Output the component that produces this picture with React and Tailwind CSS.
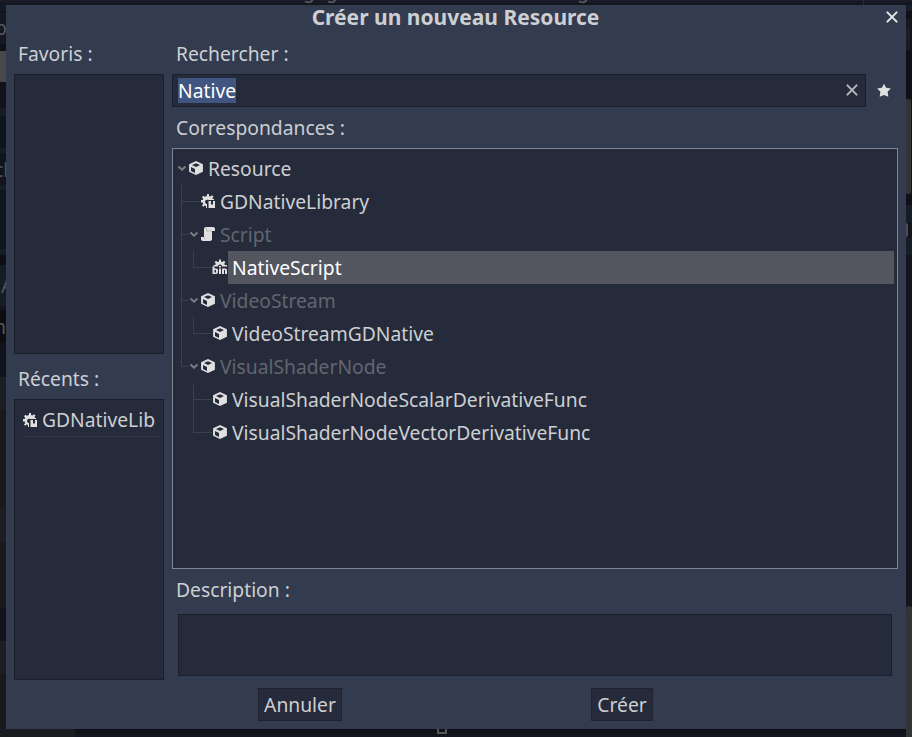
import React from "react";

function CubeIcon() {
  return (
    <svg width="16" height="16" viewBox="0 0 16 16" className="mb-px shrink-0">
      <path
        fill="#e0e0e0"
        fillRule="evenodd"
        d="M8 .9 1.1 4.200v7.600L8 15.100l6.900-3.300V4.200zM8 3.200l4 1.800-4 1.900L4 5zM3 7l4 2v4l-4-2z"
      />
    </svg>
  );
}

function LibraryIcon() {
  return (
    <svg width="16" height="16" viewBox="0 0 16 16" className="mb-px shrink-0">
      <path
        fill="#e0e0e0"
        d="M7 1h2v2l1.400.5L12 2.200 13.500 3.600 12.400 5l.6 1H14v1H8.500C6.500 6.500 5 7.500 5 9c0 1 .8 1.900 2 2.200V15H6v-2l-1.300-.5L3.400 13.800 2 12.400l1.200-1.400L2.700 9.500H1v-2.500h1.700l.5-1.300L2 4.200 3.400 2.700l1.300 1.100L7 3z"
      />
      <path fill="#e0e0e0" d="M8.500 8h2.500v3.500h2V8h2v7H8.500z" />
    </svg>
  );
}

function ScriptIcon() {
  return (
    <svg width="16" height="16" viewBox="0 0 16 16" className="mb-px shrink-0">
      <path
        fill="#e0e0e0"
        d="M6 1C4.900 1 4 1.900 4 3v8H1v2c0 1.100.9 2 2 2h7c1.100 0 2-.9 2-2V5h3V3c0-1.100-.9-2-2-2z"
      />
      <path fill="none" stroke="#b4b4b4" strokeWidth=".9" d="M6.500 2v3h5.500M4.500 11v2" />
    </svg>
  );
}

function NativeScriptIcon() {
  return (
    <svg width="16" height="16" viewBox="0 0 16 16" className="mb-px shrink-0">
      <path
        fill="#e0e0e0"
        d="M7 .5h2v2l1.300.6L12 1.800 13.400 3.200 12.200 4.700l.6 1.300H15v1.500h-5a2 2 0 0 0-4 0H1.500V6h1.700l.6-1.300L2.600 3.200 4 1.800l1.700 1.300L7 2.500z"
      />
      <g fill="#e0e0e0">
        <path fillRule="evenodd" d="M.5 7.500h2V9.500H4c1.300 0 2 .8 2 1.800v1.800c0 1.200-.8 1.900-2 1.900H.5zM2.500 11v2.500h1.500V11z" />
        <path d="M7 7h2v1.500H7zM7 9.500h2V15H7zM10 9.500h3c1.300 0 2 .8 2 1.800V15h-2v-4h-1v4h-2z" />
      </g>
    </svg>
  );
}

function CrossIcon({ color, className }) {
  return (
    <svg width="16" height="16" viewBox="0 0 16 16" className={`shrink-0 ${className}`}>
      <path
        d="M3.400 3.400l9.200 9.200M12.600 3.400l-9.200 9.200"
        stroke={color}
        strokeWidth="2"
        strokeLinecap="round"
        fill="none"
      />
    </svg>
  );
}

function StarIcon() {
  return (
    <svg width="16" height="16" viewBox="0 0 16 16" className="mb-px shrink-0">
      <path
        fill="#e0e0e0"
        d="M8 1.700l2.100 4 4.700.7-3.200 3.400.7 4.900L8 13l-4.300 1.700.7-4.900L1.200 6.400l4.700-.7z"
      />
    </svg>
  );
}

function Arrow() {
  return (
    <svg width="12" height="12" viewBox="0 0 12 12" className="mb-px shrink-0">
      <path d="M2.500 4.500l3.500 3.200 3.500-3.200" stroke="#7c7e86" strokeWidth="2" fill="none" />
    </svg>
  );
}

const icons = {
  cube: CubeIcon,
  library: LibraryIcon,
  script: ScriptIcon,
  native: NativeScriptIcon,
};

const tree = [
  { name: "Resource", level: 0, icon: "cube", open: true },
  { name: "GDNativeLibrary", level: 1, icon: "library" },
  { name: "Script", level: 1, icon: "script", open: true, dim: true },
  { name: "NativeScript", level: 2, icon: "native", last: true, through: true, selected: true },
  { name: "VideoStream", level: 1, icon: "cube", open: true, dim: true },
  { name: "VideoStreamGDNative", level: 2, icon: "cube", last: true, through: true },
  { name: "VisualShaderNode", level: 1, icon: "cube", open: true, dim: true, last: true },
  { name: "VisualShaderNodeScalarDerivativeFunc", level: 2, icon: "cube" },
  { name: "VisualShaderNodeVectorDerivativeFunc", level: 2, icon: "cube", last: true },
];

function Branch({ last, narrow }) {
  const width = narrow ? "w-[7px]" : "w-[19px]";
  return (
    <span className={`${width} h-full shrink-0 ${last ? "" : "border-l border-[#3b404e]"}`}>
      <span className={`block h-[17px] border-b border-[#3b404e] ${last ? "border-l" : ""}`} />
    </span>
  );
}

function TreeRow({ item }) {
  const Icon = icons[item.icon];
  const color = item.selected ? "text-white" : item.dim ? "text-[#62656f]" : "text-[#cdcfd2]";
  return (
    <div className="flex h-[33px] items-center">
      {item.level > 0 && <span className="w-[5px] shrink-0" />}
      {item.level === 2 && (
        <span className={`h-full w-3 shrink-0 ${item.through ? "border-l border-[#3b404e]" : ""}`} />
      )}
      {item.level > 0 && <Branch last={item.last} narrow={item.open} />}
      {item.open && <Arrow />}
      <Icon />
      <span
        className={`flex h-full flex-1 items-center whitespace-nowrap pl-1 ${color} ${item.selected ? "bg-[#53565f]" : ""}`}
      >
        {item.name}
      </span>
    </div>
  );
}

function Strip({ segments, className }) {
  return (
    <div className={`flex shrink-0 flex-col overflow-hidden ${className}`}>
      {segments.map(([size, text, shift], i) => (
        <div key={i} className={`shrink-0 overflow-hidden ${size}`}>
          {text && <span className={`block leading-[30px] text-[#55565a] ${shift}`}>{text}</span>}
        </div>
      ))}
    </div>
  );
}

const leftEdge = [
  ["h-[6px] bg-[#161824]"],
  ["h-[1px] bg-[#0d0f16]"],
  ["h-[32px] bg-[#151822]", "p", "-ml-[5px] pt-px"],
  ["h-[7px] bg-[#0f1119]"],
  ["h-[31px] bg-[#48494b]"],
  ["h-[26px] bg-[#10131c]"],
  ["h-[8px] bg-[#171b28]"],
  ["h-[32px] bg-[#0f131c]"],
  ["h-[5px] bg-[#171b28]"],
  ["h-[32px] bg-[#10141d]", "cl", "-ml-[6px] pt-[2px]"],
  ["h-[5px] bg-[#171b28]"],
  ["h-[59px] bg-[#10141d]"],
  ["h-[6px] bg-[#171b28]"],
  ["h-[10px] bg-[#0d0f15]"],
  ["h-[41px] bg-[#161b26]", "A", "pt-[6px] ml-px"],
  ["h-[4px] bg-[#11141d]"],
  ["h-[33px] bg-[#0c0d11]", "m", "-ml-[12px] pt-[2px]"],
  ["h-[34px] bg-[#10131d]"],
  ["h-[33px] bg-[#1b1e22]"],
  ["h-[66px] bg-[#17191d]"],
  ["h-[33px] bg-[#17191d]"],
  ["h-[33px] bg-[#1b1e22]"],
  ["h-[66px] bg-[#17191d]"],
  ["h-[33px] bg-[#10131d]"],
  ["h-[33px] bg-[#1b1e22]"],
  ["h-[60px] bg-[#17191d]"],
];

const rightEdge = [
  ["h-[6px] bg-[#181d29]"],
  ["h-[8px] bg-[#101118]"],
  ["h-[10px] w-[4px] bg-[#17181e]"],
  ["h-[12px] w-[4px] bg-[#1d1e23]"],
  ["h-[9px] w-[4px] bg-[#1a1b20]"],
  ["h-[49px] bg-[#101118]"],
  ["h-[95px] w-[5px] rounded-r-[3px] bg-[#323335]"],
  ["h-[11px] bg-[#101118]"],
  ["h-[18px] bg-[#161d27]"],
  ["h-[14px] w-[2px] rounded-r-full bg-[#4b4d50]"],
  ["h-[18px] bg-[#161d27]"],
  ["h-[351px] bg-[#14151c]"],
  ["h-[123px] rounded-t-[3px] bg-[#333438]"],
];

function Panel({ className, children }) {
  return <div className={`border border-[#1b1f29] bg-[#262b3b] ${className}`}>{children}</div>;
}

export default function App() {
  return (
    <div className="flex h-[737px] w-[912px] flex-col overflow-hidden bg-[#14151c] font-['Noto_Sans',sans-serif] text-[19.28px] leading-[26px] text-[#cdcfd2]">
      <div className="flex h-[5px] shrink-0 overflow-hidden bg-gradient-to-b from-[#1a1e2b] to-[#12141d] text-[#5a5c62]">
        <span className="-mt-[22px] ml-[303px] w-[11px]">g</span>
        <span className="-mt-[22px] ml-3 w-[11px]">g</span>
        <span className="-mt-[22px] ml-[240px] w-[11px]">g</span>
        <span className="ml-[275px] h-full w-px bg-[#252a36]" />
      </div>
      <div className="flex h-[724px] shrink-0">
        <Strip segments={leftEdge} className="w-[6px]" />
        <div className="flex w-[900px] flex-col bg-[#333b4f] px-2">
          <header className="flex h-[33px] shrink-0">
            <span className="w-[13px]" />
            <h1 className="flex-1 text-center text-[21px] leading-[25px] font-bold">Créer un nouveau Resource</h1>
            <span className="mt-1 -mr-[2px]">
              <CrossIcon color="#e8e9eb" className="" />
            </span>
          </header>
          <div className="flex h-[642px] gap-2">
            <aside className="flex w-[150px] flex-col">
              <div className="flex h-9 items-center pl-1 pb-[4px]">Favoris :</div>
              <Panel className="h-[280px]" />
              <div className="flex h-[45px] items-center pl-1 pt-[5px]">Récents :</div>
              <Panel className="h-[281px] pl-[7px] pr-[3px] pt-1">
                <div className="flex h-[33px] items-center overflow-hidden border-b border-[#30364a]">
                  <LibraryIcon />
                  <span className="whitespace-nowrap pl-1">GDNativeLib</span>
                </div>
              </Panel>
            </aside>
            <main className="flex w-[726px] flex-col">
              <div className="flex h-9 items-center pl-1 pb-[4px]">Rechercher :</div>
              <div className="flex h-[33px] items-center">
                <Panel className="flex h-full w-[694px] items-center justify-between px-[5px]">
                  <span className="flex h-[25px] w-[58px] items-center bg-[#405580] text-white">Native</span>
                  <CrossIcon color="#b4b6bb" className="mb-px" />
                </Panel>
                <span className="ml-[10px] flex">
                  <StarIcon />
                </span>
              </div>
              <div className="flex h-[41px] items-center pl-1">Correspondances :</div>
              <div className="h-[421px] border border-[#80848f] bg-[#262b3b] p-[3px]">
                {tree.map((item) => (
                  <TreeRow key={item.name} item={item} />
                ))}
              </div>
              <div className="flex h-[45px] items-center pl-1 pb-[3px]">Description :</div>
              <Panel className="mx-[6px] h-[62px]" />
            </main>
          </div>
          <footer className="flex h-[41px] pl-[244px] pt-2">
            <button className="h-[33px] w-[84px] border border-[#1f232f] bg-[#262b3b]">Annuler</button>
            <button className="ml-[249px] h-[33px] w-[62px] border border-[#1f232f] bg-[#262b3b]">Créer</button>
          </footer>
        </div>
        <Strip segments={rightEdge} className="w-[6px]" />
      </div>
      <div className="flex h-[8px] bg-gradient-to-b from-[#0e1017] to-[#151720]">
        <span className="w-[75px] bg-[#191d1f]" />
        <span className="ml-[362px] h-[5px] w-[10px] border-2 border-t-0 border-[#555657]" />
        <span className="ml-[459px] w-[6px] bg-[#333438]" />
      </div>
    </div>
  );
}
